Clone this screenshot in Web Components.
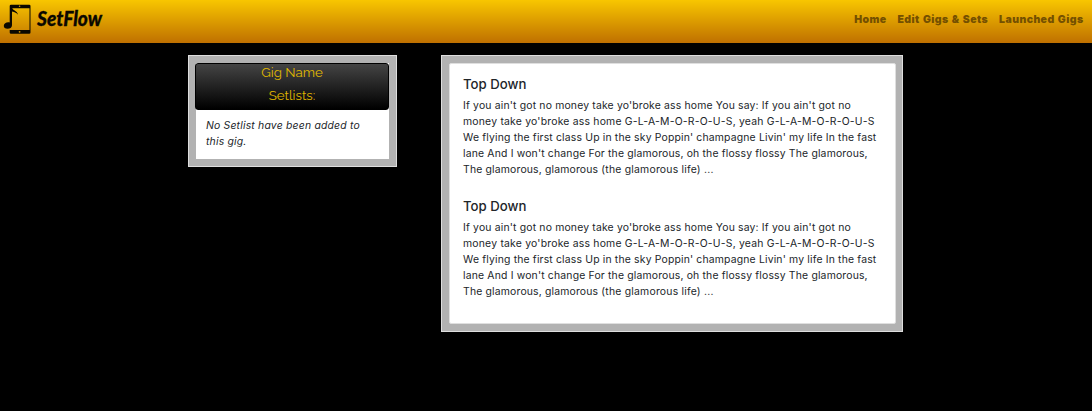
<!DOCTYPE html>
<html lang="en"><head><meta charset="utf-8"><title>SetFlow</title>
<style>body{margin:0;background:#000;color:#212529;font-family:Inter,"Liberation Sans",sans-serif;min-height:411px}</style></head>
<body><setflow-app></setflow-app>
<script>
const define=(name,html)=>customElements.define(name,class extends HTMLElement{
  constructor(){super();const t=document.createElement('template');t.innerHTML=html;this.attachShadow({mode:'open'}).append(t.content.cloneNode(true));}
});
define('setflow-logo',`<style>:host{display:block;width:110px;height:38px}svg{display:block}text{font-family:Lato,sans-serif;font-weight:900;font-style:italic;font-size:21.5px}</style>
<svg width="110" height="38" viewBox="0 0 110 38" fill="#0b0800">
<path fill-rule="evenodd" d="M11 4.700h18.200q1.300 0 1.300 1.300v26.400q0 1.300-1.300 1.300H11q-1.300 0-1.300-1.300V30h19.800V8.300H12.300c0 1.700 5.300 2.700 5.700 6.500-1.400-1.700-3-2.900-6-3.300v13.700c0 2.300-2 3.600-4.500 3.600-2.300 0-3.800-1.300-3.700-3.100.1-2.500 3.200-4.100 5.900-3.300V6q0-1.300 1.300-1.300z"/>
<circle cx="19.600" cy="6.300" r=".8" fill="#d9a300"/><circle cx="19.600" cy="31.800" r=".9" fill="#d09000"/>
<text x="37" y="25.700" textLength="65" lengthAdjust="spacingAndGlyphs" stroke="#0b0800" stroke-width=".3">SetFlow</text></svg>`);
define('nav-item',`<style>:host{display:block;font-weight:900;font-size:10.5px;line-height:16px;letter-spacing:.42px;word-spacing:.7px;color:#745000;white-space:nowrap}</style><slot></slot>`);
define('top-bar',`<style>:host{display:flex;height:43px;box-sizing:border-box;background:linear-gradient(#f8c600,#bf7000);justify-content:space-between;align-items:flex-start}nav{display:flex;gap:11px;padding:12px 8.500px 0 0}</style>
<setflow-logo></setflow-logo><nav><nav-item>Home</nav-item><nav-item>Edit Gigs &amp; Sets</nav-item><nav-item>Launched Gigs</nav-item></nav>`);
define('framed-panel',`<style>:host{display:block;box-sizing:border-box;background:#b2b2b2;border:1px solid #dedede;padding:7px}</style><slot></slot>`);
define('gig-setlists',`<style>:host{display:block;height:96px;background:#fff}header{display:flow-root;box-sizing:border-box;height:47px;margin:0 0 0 -1px;border:1px solid #000;border-radius:3px;background:linear-gradient(#444,#000);color:#e0b900;font:13.300px/23px Raleway,Lato,sans-serif;text-align:center}header div{margin-top:-3px}p{margin:0;padding:8px 10px;font-size:10.400px;line-height:16px;letter-spacing:.2px;font-style:italic;white-space:nowrap}</style>
<header><div>Gig Name<br>Setlists:</div></header><p>No Setlist have been added to<br>this gig.</p>`);
define('song-card',`<style>:host{display:block;height:122px}h5{margin:0 0 6px;font-size:13.200px;line-height:16px;font-weight:500;letter-spacing:0}p{margin:0;font-size:10.400px;line-height:16px;letter-spacing:.175px;white-space:nowrap}.caps{letter-spacing:.215px}</style>
<h5><slot></slot></h5><p>If you ain't got no money take yo'broke ass home You say: If you ain't got no<br><span class="caps">money take yo'broke ass home G-L-A-M-O-R-O-U-S, yeah G-L-A-M-O-R-O-U-S</span><br>We flying the first class Up in the sky Poppin' champagne Livin' my life In the fast<br>lane And I won't change For the glamorous, oh the flossy flossy The glamorous,<br>The glamorous, glamorous <span class="caps">(the glamorous life) ...</span></p>`);
define('song-list',`<style>:host{display:block;box-sizing:border-box;height:261px;margin-right:-1px;background:#fff;border:1px solid #dfdfdf;border-radius:2px;padding:12px 13px}</style><song-card>Top Down</song-card><song-card>Top Down</song-card>`);
define('setflow-app',`<style>:host{display:block}main{display:flex;align-items:flex-start;gap:44px;padding:12px 0 0 188px}.g{width:209px}.s{width:462px}</style>
<top-bar></top-bar><main><framed-panel class="g"><gig-setlists></gig-setlists></framed-panel><framed-panel class="s"><song-list></song-list></framed-panel></main>`);
</script></body></html>
